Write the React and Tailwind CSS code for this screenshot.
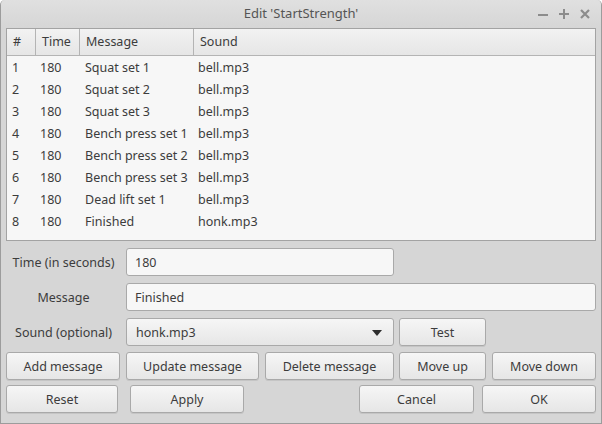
import React from "react";

const rows = [
    ["1", "180", "Squat set 1", "bell.mp3"],
    ["2", "180", "Squat set 2", "bell.mp3"],
    ["3", "180", "Squat set 3", "bell.mp3"],
    ["4", "180", "Bench press set 1", "bell.mp3"],
    ["5", "180", "Bench press set 2", "bell.mp3"],
    ["6", "180", "Bench press set 3", "bell.mp3"],
    ["7", "180", "Dead lift set 1", "bell.mp3"],
    ["8", "180", "Finished", "honk.mp3"],
];

const Button = ({ children, className = "" }) => (
    <button
        type="button"
        className={`h-[28px] pt-[2px] flex items-center justify-center rounded-[3px] border border-[#a9a9a9] bg-gradient-to-b from-[#f6f6f6] to-[#e6e6e6] text-[12.5px] text-[#3c3c3c] shadow-[0_1px_0_rgba(0,0,0,0.08)] ${className}`}
    >
        {children}
    </button>
);

const Field = ({ value, className = "" }) => (
    <div
        className={`h-[28px] pt-[2px] flex items-center px-[8px] rounded-[3px] border border-[#a9a9a9] bg-[#f7f7f7] text-[12.5px] text-[#3c3c3c] ${className}`}
    >
        {value}
    </div>
);

const Label = ({ children }) => (
    <div className="w-[115px] pt-[2px] text-center text-[12.5px] text-[#3c3c3c]">
        {children}
    </div>
);

export default function App() {
    return (
        <div
            className="w-[602px] h-[424px] flex flex-col bg-[#d6d6d6] border-x border-b border-[#9c9c9c] rounded-t-[5px] overflow-hidden"
            style={{ fontFamily: "'Noto Sans', 'Open Sans', sans-serif" }}
        >
            {/* Title bar */}
            <div className="h-[27px] shrink-0 flex items-center relative bg-gradient-to-b from-[#e0e0e0] to-[#d6d6d6]">
                <div className="flex-1 pt-[1px] text-center text-[13px] text-[#555555]">
                    Edit 'StartStrength'
                </div>
                <div className="absolute right-[10px] top-[8px] flex items-center gap-[9px] text-[#8c8c8c]">
                    <svg width="12" height="12" viewBox="0 0 12 12">
                        <rect x="1" y="6" width="10" height="2" fill="currentColor" />
                    </svg>
                    <svg width="12" height="12" viewBox="0 0 12 12">
                        <rect x="1" y="5" width="10" height="2" fill="currentColor" />
                        <rect x="5" y="1" width="2" height="10" fill="currentColor" />
                    </svg>
                    <svg width="12" height="12" viewBox="0 0 12 12">
                        <path d="M2 2 L10 10 M10 2 L2 10" stroke="currentColor" strokeWidth="2.2" />
                    </svg>
                </div>
            </div>

            <div className="flex flex-col px-[5px] pt-[1px]">
                {/* Table */}
                <div className="h-[213px] border border-[#a3a3a3] bg-[#f7f7f7] text-[12.5px] text-[#3c3c3c]">
                    <div className="h-[27px] flex border-b border-[#b4b4b4] bg-gradient-to-b from-[#f2f2f2] to-[#e6e6e6]">
                        <div className="w-[29px] pl-[6px] pt-[1px] flex items-center border-r border-[#b4b4b4]">#</div>
                        <div className="w-[44px] pl-[6px] pt-[1px] flex items-center border-r border-[#b4b4b4]">Time</div>
                        <div className="w-[114px] pl-[6px] pt-[1px] flex items-center border-r border-[#b4b4b4]">Message</div>
                        <div className="flex-1 pl-[6px] pt-[1px] flex items-center">Sound</div>
                    </div>
                    {rows.map((r) => (
                        <div key={r[0]} className="h-[22px] pt-[2px] flex items-center">
                            <div className="w-[29px] pl-[5px]">{r[0]}</div>
                            <div className="w-[44px] pl-[4px]">{r[1]}</div>
                            <div className="w-[114px] pl-[5px]">{r[2]}</div>
                            <div className="flex-1 pl-[4px]">{r[3]}</div>
                        </div>
                    ))}
                </div>

                {/* Form */}
                <div className="mt-[7px] flex items-center">
                    <Label>Time (in seconds)</Label>
                    <Field value="180" className="ml-[5px] w-[268px]" />
                </div>
                <div className="mt-[7px] flex items-center">
                    <Label>Message</Label>
                    <Field value="Finished" className="ml-[5px] w-[470px]" />
                </div>
                <div className="mt-[7px] flex items-center">
                    <Label>Sound (optional)</Label>
                    <div className="ml-[5px] w-[268px] h-[28px] pt-[2px] flex items-center justify-between pl-[9px] pr-[11px] rounded-[3px] border border-[#a9a9a9] bg-gradient-to-b from-[#f6f6f6] to-[#e6e6e6] text-[12.5px] text-[#3c3c3c]">
                        <span>honk.mp3</span>
                        <svg width="10" height="6" viewBox="0 0 10 6">
                            <path d="M0 0 L10 0 L5 6 Z" fill="#2e2e2e" />
                        </svg>
                    </div>
                    <Button className="ml-[5px] w-[87px]">Test</Button>
                </div>

                {/* Action buttons */}
                <div className="mt-[6px] flex items-center">
                    <Button className="w-[114px]">Add message</Button>
                    <Button className="ml-[6px] w-[133px]">Update message</Button>
                    <Button className="ml-[6px] w-[129px]">Delete message</Button>
                    <Button className="ml-[5px] w-[87px]">Move up</Button>
                    <Button className="ml-[6px] w-[104px]">Move down</Button>
                </div>
                <div className="mt-[5px] flex items-center">
                    <Button className="w-[112px]">Reset</Button>
                    <Button className="ml-[12px] w-[114px]">Apply</Button>
                    <Button className="ml-auto w-[115px]">Cancel</Button>
                    <Button className="ml-[8px] w-[114px]">OK</Button>
                </div>
            </div>
        </div>
    );
}
